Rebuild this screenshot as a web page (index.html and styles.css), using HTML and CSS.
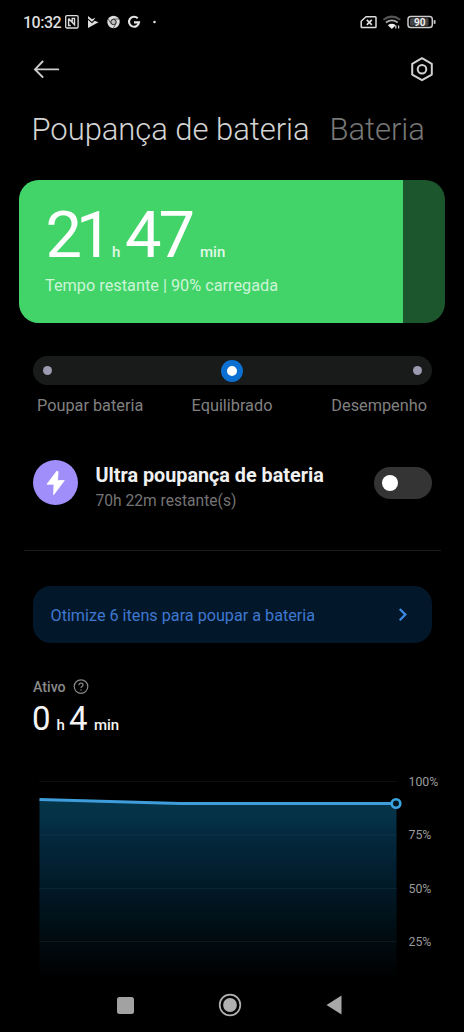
FILE: index.html
```html
<!DOCTYPE html>
<html lang="pt">
<head>
<meta charset="utf-8">
<title>Poupança de bateria</title>
<link rel="stylesheet" href="styles.css">
</head>
<body>
<div class="screen">
  <div class="status">
    <span class="clock">10:32</span>
    <svg class="status-left" width="96" height="16" viewBox="0 0 96 16" fill="none">
      <rect x="1.700" y="1.600" width="12.400" height="12.400" rx="1.200" stroke="#ddd" stroke-width="1.300"/>
      <path d="M6.800 11.500H4.600V4.600M4.600 4.600L10.500 10.800V4.400H8.200V8" stroke="#ddd" stroke-width="1.400"/>
      <path d="M24 2l4 3.200 3.200-1.500-1.200 2.800L34.500 8.200 24 14z" fill="#ddd"/>
      <path d="M24 5.200l4 3.400 4.500-4.400" stroke="#000" stroke-width="1.100"/>
      <circle cx="49.500" cy="8" r="6.200" fill="#ddd"/>
      <circle cx="49.500" cy="8" r="2.700" fill="#bbb" stroke="#222" stroke-width="1"/>
      <path d="M49.500 5h5.800M46.900 9.500L44 4.800M52.100 9.500l-2.800 4.600" stroke="#444" stroke-width=".8"/>
      <path d="M73.700 4.300A5 5 0 1 0 75 8.400H70" stroke="#e6e6e6" stroke-width="2.100"/>
      <circle cx="90.500" cy="8" r="1.300" fill="#ddd"/>
    </svg>
    <svg class="status-right" width="78" height="18" viewBox="0 0 78 18" fill="none">
      <path d="M6 3.800h9.200q.8 0 .8.8v9.200q0 .8-.8.8H2q-.8 0-.8-.8V8.200z" stroke="#ddd" stroke-width="1.500" stroke-linejoin="round"/>
      <path d="M6.800 6.800l5 5M11.800 6.800l-5 5" stroke="#ddd" stroke-width="1.700"/>
      <path d="M23.400 6.800q8.400-6.400 16.800 0" stroke="#555" stroke-width="2"/>
      <path d="M25.900 9.500q5.900-4.200 11.800 0" stroke="#aaa" stroke-width="1.800"/>
      <path d="M27.800 12.200q4-2.800 8 0L31.800 16z" fill="#eee"/>
      <path d="M35.800 15.500v-3M38.600 12.500v3" stroke="#ccc" stroke-width="1.300"/>
      <rect x="48" y="3.500" width="24.300" height="11" rx="2.800" stroke="#ccc" stroke-width="1.500"/>
      <rect x="50" y="5.300" width="18.500" height="7.400" rx="1" fill="#444"/>
      <path d="M74.600 7.200v3.600" stroke="#ccc" stroke-width="1.800"/>
      <text class="pct" x="59.800" y="12.900" text-anchor="middle">90</text>
    </svg>
  </div>

  <div class="toolbar">
    <svg width="28" height="20" viewBox="0 0 28 20" fill="none" stroke="#ccc" stroke-width="1.900" stroke-linecap="round"><path d="M25.300 10.400H2.600M9.600 2.500L2 10.400l7.600 7.600"/></svg>
    <svg width="26" height="26" viewBox="0 0 26 26" fill="none" stroke="#d0d0d0" stroke-width="2"><path d="M13 2.200L22.800 7.800v10.800L13 24.200 3.200 18.600V7.800z" stroke-linejoin="round"/><circle cx="13" cy="13.200" r="4.300"/></svg>
  </div>

  <div class="tabs"><span class="tab active">Poupança de bateria</span><span class="tab">Bateria</span></div>

  <div class="card">
    <div class="card-fill">
      <div class="remaining"><span class="big d21">21</span><span class="unit h">h</span><span class="big d47">47</span><span class="unit">min</span></div>
      <div class="caption">Tempo restante | 90% carregada</div>
    </div>
  </div>

  <div class="slider"><i class="dot"></i><i class="thumb"></i><i class="dot"></i></div>
  <div class="modes"><span>Poupar bateria</span><span>Equilibrado</span><span>Desempenho</span></div>

  <div class="ultra">
    <svg width="45" height="45" viewBox="0 0 45 45"><circle cx="22.500" cy="22.500" r="22.500" fill="#a08ffa"/><path d="M23.800 11.200L14 24.200h7l-.4 10.600L31.300 20.600h-6.800l.6-9z" fill="#fff" stroke="#fff" stroke-width=".8" stroke-linejoin="round"/></svg>
    <div class="ultra-text"><div class="ultra-title">Ultra poupança de bateria</div><div class="ultra-sub">70h 22m restante(s)</div></div>
    <div class="switch"><i></i></div>
  </div>
  <div class="divider"></div>

  <div class="banner"><span>Otimize 6 itens para poupar a bateria</span>
    <svg width="10" height="14" viewBox="0 0 10 14" fill="none" stroke="#3c8ae6" stroke-width="2.200"><path d="M1.700 1L7.400 6.600l-5.700 5.600"/></svg>
  </div>

  <div class="active-head"><span>Ativo</span>
    <svg width="16" height="16" viewBox="0 0 16 16" fill="none" stroke="#888" stroke-width="1.200"><circle cx="8" cy="7.600" r="6.800"/><path d="M6 6.200q0-2 2-2t2 1.800q0 1-1.100 1.600Q8 8.200 8 9.100M8 10.200v1.300"/></svg>
  </div>
  <div class="active-time"><span class="num">0</span><span class="u uh">h</span><span class="num">4</span><span class="u um">min</span></div>

  <svg class="chart" width="464" height="210" viewBox="0 0 464 210">
    <defs>
      <linearGradient id="area" x1="0" y1="29" x2="0" y2="209" gradientUnits="userSpaceOnUse">
        <stop offset="0" stop-color="#053448"/><stop offset=".12" stop-color="#043145"/><stop offset=".18" stop-color="#042a40"/><stop offset=".4" stop-color="#021e2f"/><stop offset=".65" stop-color="#01121a"/><stop offset="1" stop-color="#000"/>
      </linearGradient>
    </defs>
    <path d="M39.500 29L180 33.500H396.500V208H39.500z" fill="url(#area)"/>
    <path class="grid" d="M39.500 11.500H397M39.500 65H397M39.500 118.500H397M39.500 171.500H397"/>
    <path d="M39.500 29.400L180 33.500H392" fill="none" stroke="#3f9ddb" stroke-width="3"/>
    <circle cx="396" cy="33.500" r="4.300" fill="#00151f" stroke="#3ba3e0" stroke-width="2.600"/>
    <g class="ticks"><text x="408.500" y="16">100%</text><text x="408.500" y="69.300">75%</text><text x="408.500" y="122.500">50%</text><text x="408.500" y="175.700">25%</text></g>
  </svg>

  <div class="nav">
    <svg width="17" height="17" viewBox="0 0 17 17"><rect width="17" height="17" rx="2.500" fill="#a2a2a2"/></svg>
    <svg width="24" height="24" viewBox="0 0 24 24"><circle cx="12" cy="12" r="10.300" fill="none" stroke="#b0b0b0" stroke-width="1.700"/><circle cx="12" cy="12" r="6.900" fill="#b0b0b0"/></svg>
    <svg width="16" height="20" viewBox="0 0 16 20"><path d="M15.500.500v19L.500 10z" fill="#a8a8a8"/></svg>
  </div>
</div>
</body>
</html>
```
FILE: styles.css
```css
* { box-sizing: border-box; }
body { margin: 0; background: #000; font-family: Roboto, "Liberation Sans", sans-serif; }
.screen { width: 464px; height: 1032px; overflow: hidden; display: flex; flex-direction: column; background: #000; color: #fff; white-space: nowrap; }
.screen > * { flex-shrink: 0; }
.screen svg { display: block; flex-shrink: 0; }

.status { height: 44px; display: flex; align-items: center; padding: 0 26px 0 23px; }
.clock { font-size: 16px; line-height: 20px; font-weight: 500; color: #ddd; width: 41px; letter-spacing: -0.5px; padding-top: 1px; }
.status-right { margin-left: auto; }
.pct { font-size: 10px; font-weight: 700; fill: #eee; }

.toolbar { height: 50px; display: flex; align-items: center; justify-content: space-between; padding: 0 29px 0 33px; }

.tabs { height: 86px; display: flex; padding: 17px 0 0 31.5px; gap: 20px; }
.tab { font-size: 31px; line-height: 38px; font-weight: 300; letter-spacing: -0.05px; color: #777; }
.tab.active { color: #d4d4d4; }

.card { height: 143px; margin: 0 19px; border-radius: 20px; overflow: hidden; background: #1c562c; }
.card-fill { width: 384px; height: 143px; background: #42d469; padding: 20px 0 0 26.5px; }
.remaining { height: 70px; display: flex; align-items: baseline; line-height: 70px; }
.big { font-size: 65px; letter-spacing: -3px; }
.d21 { width: 66.5px; letter-spacing: -6px; }
.d47 { width: 75px; }
.unit { font-size: 15px; font-weight: 500; color: #e0f8e6; }
.unit.h { width: 13px; }
.caption { font-size: 16.3px; line-height: 20px; margin: 6px 0 0 -0.5px; color: #cdf4d7; }

.slider { height: 29px; margin: 33px 32.5px 0; padding: 0 10px; border-radius: 15px; background: #181b1a; display: flex; align-items: center; justify-content: space-between; }
.dot { width: 9px; height: 9px; border-radius: 50%; background: #9c9ab0; }
.thumb { width: 22px; height: 22px; border-radius: 50%; border: 6px solid #0c70d2; background: #fff; }
.modes { height: 20px; margin: 11px 37px 0; display: grid; grid-template-columns: 1fr auto 1fr; font-size: 16.3px; line-height: 20px; color: #808080; }
.modes span:last-child { text-align: right; }

.ultra { height: 45px; margin: 44px 32.5px 0; display: flex; align-items: center; }
.ultra-text { margin-left: 18px; padding-top: 5px; }
.ultra-title { font-size: 19.8px; line-height: 24px; font-weight: 700; color: #f0f0f0; margin-top: 4px; }
.ultra-sub { font-size: 15.6px; line-height: 20px; color: #747474; margin-top: 3px; }
.switch { width: 58px; height: 32px; margin-left: auto; border-radius: 16px; background: #343434; padding: 8px; }
.switch i { display: block; width: 16px; height: 16px; border-radius: 50%; background: #fff; }
.divider { height: 1px; margin: 45px 23px 0 24px; background: #1b1b1b; }

.banner { height: 57px; margin: 35px 32.5px 0; padding: 1px 24px 0 18px; border-radius: 18px; background: #03172b; display: flex; align-items: center; justify-content: space-between; font-size: 16.2px; color: #3f78cf; }

.active-head { height: 18px; margin: 35px 0 0 33px; display: flex; align-items: center; gap: 7.5px; font-size: 14.2px; line-height: 18px; font-weight: 500; color: #8a8a8a; }
.active-time { height: 40px; margin: 3px 0 0 32px; display: flex; align-items: baseline; line-height: 40px; color: #f4f4f4; }
.num { font-size: 33px; }
.u { font-size: 15px; font-weight: 500; }
.uh { margin: 0 4px 0 6px; }
.um { margin-left: 6.5px; }

.chart { margin-top: 31px; }
.grid { fill: none; stroke: #9ab4c4; stroke-opacity: .16; stroke-width: 1; stroke-dasharray: 1 1; }
.ticks { font-size: 12.3px; fill: #9a9a9a; }

.nav { height: 50px; padding: 0 122px 0 117px; display: flex; align-items: center; justify-content: space-between; }
```
